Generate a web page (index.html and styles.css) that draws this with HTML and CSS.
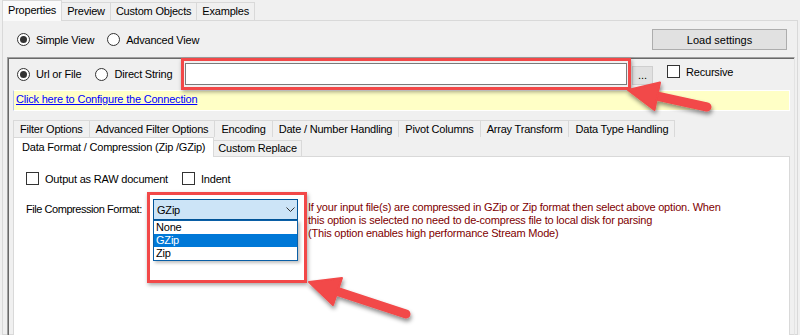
FILE: index.html
```html
<!doctype html>
<html>
  <head>
    <meta charset="utf-8">
    <link rel="stylesheet" href="styles.css">
  </head>

  <body>
    <div class="app">
      <nav class="main-tabs">
        <span class="tab active">Properties</span>
        <span class="tab">Preview</span>
        <span class="tab">Custom Objects</span>
        <span class="tab">Examples</span>
      </nav>

      <main class="page">
        <section class="view-row">
          <label class="opt"><span class="radio checked"></span>Simple View</label>
          <label class="opt"><span class="radio"></span>Advanced View</label>
          <button class="btn load-btn">Load settings</button>
        </section>

        <section class="panel">
          <div class="source-row">
            <div class="source-options">
              <label class="opt"><span class="radio checked"></span>Url or File</label>
              <label class="opt"><span class="radio"></span>Direct String</label>
            </div>
            <input class="path-input" type="text">
            <button class="btn browse-btn">...</button>
            <label class="opt recursive"><span class="check"></span>Recursive</label>
          </div>

          <div class="info-bar">
            <a href="#">Click here to Configure the Connection</a>
          </div>

          <div class="inner-tabs">
            <div class="tab-row">
              <span class="tab">Filter Options</span>
              <span class="tab">Advanced Filter Options</span>
              <span class="tab">Encoding</span>
              <span class="tab">Date / Number Handling</span>
              <span class="tab">Pivot Columns</span>
              <span class="tab">Array Transform</span>
              <span class="tab">Data Type Handling</span>
            </div>
            <div class="tab-row front">
              <span class="tab active">Data Format / Compression (Zip /GZip)</span>
              <span class="tab">Custom Replace</span>
            </div>
          </div>

          <div class="tab-body">
            <div class="check-row">
              <label class="opt"><span class="check"></span>Output as RAW document</label>
              <label class="opt"><span class="check"></span>Indent</label>
            </div>

            <div class="format-row">
              <span class="format-label">File Compression Format:</span>
              <div class="combo">
                <div class="combo-box">
                  <span>GZip</span>
                  <svg class="chevron" width="9" height="5" viewBox="0 0 9 5">
                    <path d="M0.5 0.5 L4.5 4.5 L8.5 0.5" fill="none" stroke="#333" stroke-width="1"/>
                  </svg>
                </div>
                <ul class="combo-list">
                  <li>None</li>
                  <li class="selected">GZip</li>
                  <li>Zip</li>
                </ul>
              </div>
              <p class="hint">
                If your input file(s) are compressed in GZip or Zip format then select above option. When<br>
                this option is selected no need to de-compress file to local disk for parsing<br>
                (This option enables high performance Stream Mode)
              </p>
            </div>
          </div>
        </section>
      </main>

      <!-- annotation overlays -->
      <div class="mark mark-input"></div>
      <div class="mark mark-combo"></div>
      <svg class="arrows" width="800" height="335" viewBox="0 0 800 335">
        <defs>
          <filter id="shadow" x="-20%" y="-20%" width="140%" height="160%">
            <feDropShadow dx="1" dy="3" stdDeviation="2" flood-color="#000" flood-opacity="0.45"/>
          </filter>
        </defs>
        <g fill="#f24848" stroke="#f24848" filter="url(#shadow)">
          <line x1="707" y1="107" x2="652" y2="95" stroke-width="9" stroke-linecap="round"/>
          <polygon points="628,90 660,82.5 654.5,110" stroke-width="2" stroke-linejoin="round"/>
          <line x1="406" y1="314" x2="333" y2="290" stroke-width="9" stroke-linecap="round"/>
          <polygon points="309,282 342,278 333,305" stroke-width="2" stroke-linejoin="round"/>
        </g>
      </svg>
    </div>
  </body>
</html>
```

FILE: styles.css
```css
*,
*::before,
*::after {
  box-sizing: border-box;
  margin: 0;
  padding: 0;
}

body {
  font-family: "Liberation Sans", Arial, sans-serif;
  font-size: 11px;
  letter-spacing: -0.2px;
  color: #000;
  background-color: #f0f0f0;
  width: 800px;
  height: 335px;
  overflow: hidden;
}

.app {
  position: relative;
  height: 335px;
}

/* Top tab strip */
.main-tabs {
  display: flex;
  align-items: flex-end;
  height: 20px;
  padding-left: 2px;
}

.main-tabs .tab {
  height: 18px;
  line-height: 17px;
  padding: 0 5px;
  border: 1px solid #d9d9d9;
  border-bottom: none;
  margin-left: -1px;
  background-color: #f0f0f0;
}

.main-tabs .tab.active {
  height: 21px;
  line-height: 18px;
  margin-left: 0;
  margin-bottom: -1px;
  position: relative;
  z-index: 1;
  background-color: #fafafa;
}

.page {
  height: 315px;
  margin: 0 2px;
  padding: 0 2px 0 4px;
  border: 1px solid #d9d9d9;
  background-color: #f0f0f0;
}

.view-row {
  display: flex;
  align-items: center;
  height: 36px;
  padding: 1px 8px 0 10px;
}

.opt {
  display: flex;
  align-items: center;
  gap: 6px;
  margin-right: 13px;
  white-space: nowrap;
}

.radio,
.check {
  display: inline-block;
  width: 13px;
  height: 13px;
  border: 1px solid #333;
  background-color: #fff;
  flex: none;
}

.radio {
  border-radius: 50%;
  position: relative;
}

.radio.checked::after {
  content: "";
  position: absolute;
  left: 2px;
  top: 2px;
  width: 7px;
  height: 7px;
  border-radius: 50%;
  background-color: #333;
}

.btn {
  font: inherit;
  color: #000;
  background-color: #e1e1e1;
  border: 1px solid #adadad;
}

.load-btn {
  margin-left: auto;
  width: 135px;
  height: 21px;
}

/* Connection panel */
.panel {
  height: 278px;
  border-top: 1px solid #a0a0a0;
  border-left: 1px solid #a0a0a0;
  border-right: 1px solid #e3e3e3;
  box-shadow: inset 1px 1px 0 #696969;
}

.source-row {
  display: flex;
  align-items: center;
  height: 32px;
  padding-left: 9px;
}

.source-options {
  display: flex;
  width: 168px;
}

.source-options .opt {
  margin-right: 14px;
}

.path-input {
  width: 442px;
  height: 22px;
  border: 1px solid #7a7a7a;
  background-color: #fff;
}

.browse-btn {
  width: 21px;
  height: 19px;
  margin-left: 5px;
  margin-top: 2px;
  border-color: #cfcfcf;
  line-height: 14px;
}

.recursive {
  margin-left: 14px;
  margin-bottom: 5px;
}

.info-bar {
  height: 21px;
  margin: 0 4px 0 5px;
  padding: 2px 0 0 2px;
  background-color: #ffffc6;
  border: 1px solid #fff;
  border-left-color: #b9c4e6;
}

.info-bar a {
  color: #0000ff;
}

/* Inner tab control */
.inner-tabs {
  margin: 9px 4px 0 5px;
}

.tab-row {
  display: flex;
  align-items: flex-end;
  height: 17px;
}

.tab-row .tab {
  height: 17px;
  line-height: 16px;
  padding: 0 6px;
  border: 1px solid #d9d9d9;
  border-bottom: none;
  margin-right: -1px;
  background-color: #f0f0f0;
  white-space: nowrap;
}

.tab-row.front {
  height: 19px;
}

.tab-row.front .tab {
  height: 16px;
  line-height: 15px;
  padding: 0 4px;
}

.tab-row.front .tab.active {
  height: 20px;
  line-height: 18px;
  margin-bottom: -1px;
  position: relative;
  z-index: 1;
  background-color: #fff;
  padding: 0 8px;
}

.tab-body {
  height: 180px;
  margin: 0 4px 0 5px;
  padding: 15px 12px 0;
  background-color: #fff;
  border: 1px solid #d9d9d9;
}

.check-row {
  display: flex;
  align-items: center;
  height: 13px;
}

.check-row .opt {
  margin-right: 14px;
}

.format-row {
  display: flex;
  align-items: flex-start;
  margin-top: 14px;
}

.format-label {
  width: 127px;
  line-height: 21px;
  letter-spacing: -0.45px;
  white-space: nowrap;
}

.combo {
  position: relative;
  width: 145px;
}

.combo-box {
  display: flex;
  align-items: center;
  justify-content: space-between;
  height: 21px;
  padding: 0 2px 0 3px;
  background-color: #cce4f7;
  border: 1px solid #005499;
}

.combo-list {
  position: absolute;
  left: 0;
  top: 21px;
  width: 145px;
  list-style: none;
  background-color: #fff;
  border: 1px solid #0a5fa6;
  box-shadow: 2px 2px 3px rgba(0, 0, 0, 0.25);
}

.combo-list li {
  height: 13px;
  line-height: 13px;
  padding-left: 2px;
}

.combo-list li.selected {
  background-color: #0078d7;
  color: #fff;
}

.hint {
  margin: 2px 0 0 10px;
  line-height: 13px;
  color: #800000;
  white-space: nowrap;
}

/* Annotations */
.mark {
  position: absolute;
  border: 3px solid #f24848;
  box-shadow: 1px 2px 4px rgba(0, 0, 0, 0.35);
}

.mark-input {
  left: 181px;
  top: 58px;
  width: 450px;
  height: 32px;
}

.mark-combo {
  left: 147px;
  top: 192px;
  width: 160px;
  height: 91px;
}

.arrows {
  position: absolute;
  left: 0;
  top: 0;
  pointer-events: none;
}
```
